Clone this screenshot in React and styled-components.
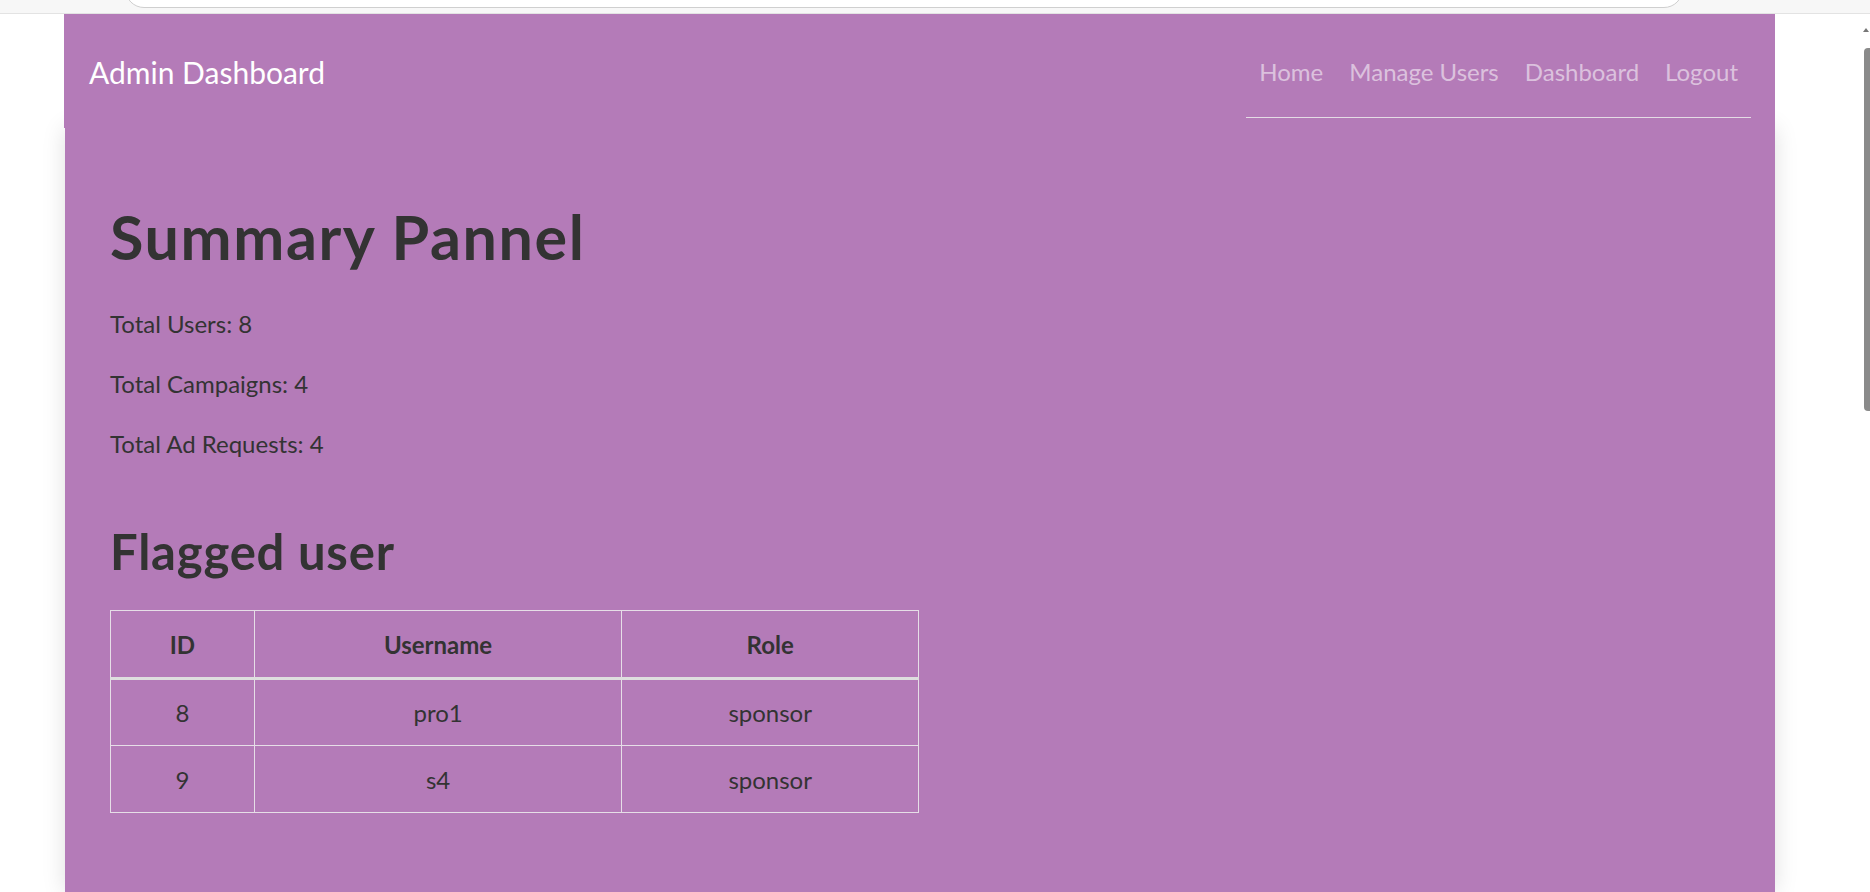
import React from "react";
import styled, { createGlobalStyle } from "styled-components";

const purple = "#b47bb8";

const Global = createGlobalStyle`
  * { box-sizing: border-box; }
  html, body { margin: 0; padding: 0; background: #ffffff; overflow: hidden; }
  body { font-family: Lato, "Noto Sans", sans-serif; color: #333333; }
`;

const Page = styled.div`
  width: 1870px;
  height: 892px;
  display: flex;
  flex-direction: column;
  overflow: hidden;
`;

const ChromeStrip = styled.div`
  height: 14px;
  flex: none;
  background: #f7f7f7;
  border-bottom: 1px solid #e3e3e3;
  position: relative;
`;

const AddressBar = styled.div`
  position: absolute;
  left: 125px;
  width: 1558px;
  top: -30px;
  height: 38px;
  background: #ffffff;
  border: 1px solid #cfcfcf;
  border-radius: 0 0 19px 19px;
`;

const Body = styled.div`
  flex: 1;
  display: flex;
  min-height: 0;
`;

const Gutter = styled.div`
  width: ${(p) => p.$w}px;
  flex: none;
  position: relative;
`;

const ScrollThumb = styled.div`
  position: absolute;
  right: 0;
  top: 34px;
  width: 6px;
  height: 363px;
  background: #8a8a8a;
  border-radius: 4px 0 0 4px;
`;

const ScrollArrow = styled.div`
  position: absolute;
  right: 1px;
  top: 14px;
  width: 0;
  height: 0;
  border-left: 3px solid transparent;
  border-right: 3px solid transparent;
  border-bottom: 4px solid #777;
`;

const Main = styled.div`
  width: 1711px;
  flex: none;
  display: flex;
  flex-direction: column;
`;

const Navbar = styled.nav`
  position: relative;
  z-index: 1;
  height: 114px;
  flex: none;
  background: ${purple};
  padding: 12px 24px 10px 25px;
  display: flex;
  align-items: stretch;
  justify-content: space-between;
`;

const Brand = styled.a`
  align-self: center;
  color: #ffffff;
  font-size: 30px;
  line-height: 1.2;
  text-decoration: none;
  margin-top: 0;
`;

const NavList = styled.ul`
  list-style: none;
  margin: 0;
  padding: 0;
  display: flex;
  align-items: center;
  border-bottom: 1px solid #e4dce5;
`;

const NavLink = styled.a`
  display: block;
  padding: 0 13px;
  margin-top: 1px;
  font-size: 24px;
  line-height: 36px;
  color: rgba(255, 255, 255, 0.55);
  text-decoration: none;
`;

const Card = styled.main`
  flex: 1;
  margin-left: 1px;
  background: ${purple};
  box-shadow: 0 0 22px rgba(0, 0, 0, 0.13);
  padding: 73px 45px 45px 45px;
`;

const Title = styled.h1`
  margin: 0 0 33px;
  font-size: 61px;
  line-height: 72px;
  font-weight: 700;
  color: #333333;
  letter-spacing: 1.6px;
`;

const Stat = styled.p`
  margin: 0 0 24px;
  font-size: 24px;
  line-height: 36px;
  color: #333333;
`;

const SubTitle = styled.h2`
  margin: 60px 0 30px;
  font-size: 49px;
  line-height: 58px;
  font-weight: 700;
  color: #333333;
  letter-spacing: 0.8px;
`;

const Table = styled.table`
  border-collapse: collapse;
  width: 809px;
  font-size: 24px;
  color: #333333;
  text-align: center;
`;

const HeadCell = styled.th`
  width: ${(p) => p.$w}px;
  height: 68px;
  padding: 0;
  font-weight: 700;
  border: 1px solid #e6dee7;
  border-bottom: 3px solid #dedede;
`;

const Cell = styled.td`
  height: 67px;
  padding: 0;
  border: 1px solid #e6dee7;
`;

const links = ["Home", "Manage Users", "Dashboard", "Logout"];
const rows = [
  { id: 8, username: "pro1", role: "sponsor" },
  { id: 9, username: "s4", role: "sponsor" },
];

export default function App() {
  return (
    <>
      <Global />
      <Page>
        <ChromeStrip>
          <AddressBar />
        </ChromeStrip>
        <Body>
          <Gutter $w={64} />
          <Main>
            <Navbar>
              <Brand href="#">Admin Dashboard</Brand>
              <NavList>
                {links.map((l) => (
                  <li key={l}>
                    <NavLink href="#">{l}</NavLink>
                  </li>
                ))}
              </NavList>
            </Navbar>
            <Card>
              <Title>Summary Pannel</Title>
              <Stat>Total Users: 8</Stat>
              <Stat>Total Campaigns: 4</Stat>
              <Stat>Total Ad Requests: 4</Stat>
              <SubTitle>Flagged user</SubTitle>
              <Table>
                <thead>
                  <tr>
                    <HeadCell $w={144}>ID</HeadCell>
                    <HeadCell $w={368}>Username</HeadCell>
                    <HeadCell $w={297}>Role</HeadCell>
                  </tr>
                </thead>
                <tbody>
                  {rows.map((r) => (
                    <tr key={r.id}>
                      <Cell>{r.id}</Cell>
                      <Cell>{r.username}</Cell>
                      <Cell>{r.role}</Cell>
                    </tr>
                  ))}
                </tbody>
              </Table>
            </Card>
          </Main>
          <Gutter $w={95}>
            <ScrollArrow />
            <ScrollThumb />
          </Gutter>
        </Body>
      </Page>
    </>
  );
}
